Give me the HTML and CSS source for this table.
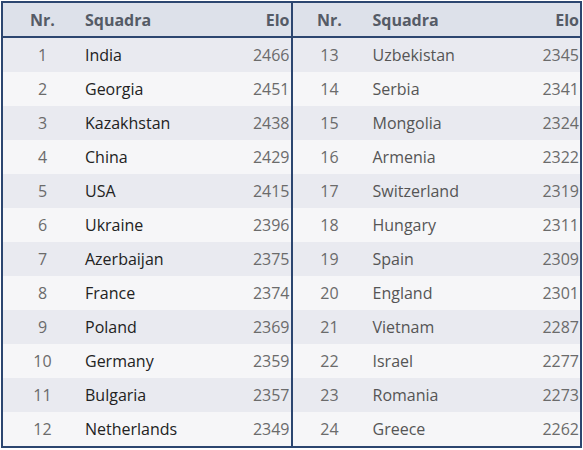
FILE: index.html
```html
<!DOCTYPE html>
<html>
<head>
<meta charset="utf-8">
<link rel="stylesheet" href="styles.css">
</head>
<body>
<table class="rank">
<thead>
<tr><th class="nr">Nr.</th><th class="team">Squadra</th><th class="elo split">Elo</th><th class="nr nr2">Nr.</th><th class="team team2">Squadra</th><th class="elo">Elo</th></tr>
</thead>
<tbody>
<tr><td class="nr">1</td><td class="team">India</td><td class="elo split">2466</td><td class="nr nr2">13</td><td class="team team2">Uzbekistan</td><td class="elo">2345</td></tr>
<tr><td class="nr">2</td><td class="team">Georgia</td><td class="elo split">2451</td><td class="nr nr2">14</td><td class="team team2">Serbia</td><td class="elo">2341</td></tr>
<tr><td class="nr">3</td><td class="team">Kazakhstan</td><td class="elo split">2438</td><td class="nr nr2">15</td><td class="team team2">Mongolia</td><td class="elo">2324</td></tr>
<tr><td class="nr">4</td><td class="team">China</td><td class="elo split">2429</td><td class="nr nr2">16</td><td class="team team2">Armenia</td><td class="elo">2322</td></tr>
<tr><td class="nr">5</td><td class="team">USA</td><td class="elo split">2415</td><td class="nr nr2">17</td><td class="team team2">Switzerland</td><td class="elo">2319</td></tr>
<tr><td class="nr">6</td><td class="team">Ukraine</td><td class="elo split">2396</td><td class="nr nr2">18</td><td class="team team2">Hungary</td><td class="elo">2311</td></tr>
<tr><td class="nr">7</td><td class="team">Azerbaijan</td><td class="elo split">2375</td><td class="nr nr2">19</td><td class="team team2">Spain</td><td class="elo">2309</td></tr>
<tr><td class="nr">8</td><td class="team">France</td><td class="elo split">2374</td><td class="nr nr2">20</td><td class="team team2">England</td><td class="elo">2301</td></tr>
<tr><td class="nr">9</td><td class="team">Poland</td><td class="elo split">2369</td><td class="nr nr2">21</td><td class="team team2">Vietnam</td><td class="elo">2287</td></tr>
<tr><td class="nr">10</td><td class="team">Germany</td><td class="elo split">2359</td><td class="nr nr2">22</td><td class="team team2">Israel</td><td class="elo">2277</td></tr>
<tr><td class="nr">11</td><td class="team">Bulgaria</td><td class="elo split">2357</td><td class="nr nr2">23</td><td class="team team2">Romania</td><td class="elo">2273</td></tr>
<tr><td class="nr">12</td><td class="team">Netherlands</td><td class="elo split">2349</td><td class="nr nr2">24</td><td class="team team2">Greece</td><td class="elo">2262</td></tr>
</tbody>
</table>
</body>
</html>
```
FILE: styles.css
```css
html, body {
  margin: 0;
  padding: 0;
  background: #ffffff;
}
body {
  padding: 1px 1px 0 1px;
  font-family: "Open Sans", "Noto Sans", sans-serif;
  font-size: 16px;
}
.rank {
  border-collapse: collapse;
  width: 581px;
  table-layout: fixed;
  border: 2px solid #2c4670;
}
.rank th, .rank td {
  padding: 0;
  height: 34px;
  white-space: nowrap;
}
.rank thead tr {
  background: #dde1ea;
  border-bottom: 2px solid #2c4670;
}
.rank th {
  color: #555b66;
  font-weight: 700;
  height: 33px;
}
.rank tbody tr:nth-child(odd) { background: #e9eaf0; }
.rank tbody tr:nth-child(even) { background: #f6f6f8; }
.rank td { color: #222; }
.nr { width: 79px; text-align: center; }
.nr.nr2 { width: 74px; }
.rank td.nr { color: #6b6b6b; }
.team { text-align: left; padding-left: 3px !important; width: 128px; }
.team.team2 { padding-left: 6px !important; width: 130px; }
.rank td.team2 { color: #555; }
.elo { text-align: right; padding-right: 1px !important; }
.rank td.elo { color: #6b6b6b; }
.split { border-right: 2px solid #2c4670; }
.rank th.elo { color: #555b66; }
```
